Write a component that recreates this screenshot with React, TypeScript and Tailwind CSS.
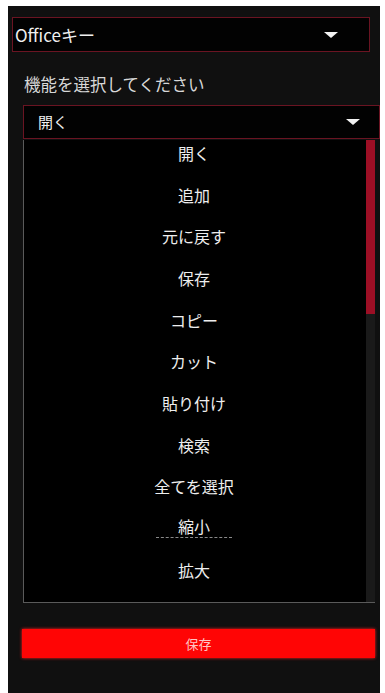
import React from "react";

const items = [
  "開く",
  "追加",
  "元に戻す",
  "保存",
  "コピー",
  "カット",
  "貼り付け",
  "検索",
  "全てを選択",
  "縮小",
  "拡大",
];

function Tri({ className }: { className?: string }) {
  return (
    <svg width="14" height="6" viewBox="0 0 14 6" className={className}>
      <polygon points="0,0 14,0 7,6" fill="#f2f2f2" />
    </svg>
  );
}

export default function App() {
  return (
    <div
      className="w-[385px] h-[693px] bg-white overflow-hidden"
      style={{ fontFamily: '"Noto Sans CJK JP", "Noto Sans", sans-serif' }}
    >
      <div className="ml-[8px] mt-[6px] w-[372px] h-[687px] bg-[#101010] flex flex-col">
        {/* first select */}
        <div className="ml-[4px] mt-[11px] w-[358px] h-[35px] bg-[#020202] border border-[#6a1422] flex items-center justify-between pl-[2px] pr-[31px]">
          <span className="text-[17px] text-[#f0f0f0] leading-none">Officeキー</span>
          <Tri />
        </div>

        {/* label */}
        <div className="ml-[16px] mt-[24px] text-[16.5px] leading-none text-[#d8d8d8]">
          機能を選択してください
        </div>

        {/* second select */}
        <div className="ml-[15px] mt-[12px] w-[357px] h-[34px] bg-[#020202] border border-[#6a1422] flex items-center justify-between pl-[14px] pr-[19px]">
          <span className="text-[15px] text-[#f0f0f0] leading-none">開く</span>
          <Tri />
        </div>

        {/* dropdown list */}
        <div className="ml-[15px] mt-[1px] w-[352px] h-[463px] bg-black border-l border-b border-[#5a5a5a] flex overflow-hidden">
          <div className="flex-1 flex flex-col pr-[2px]">
            {items.map((t) => (
              <div
                key={t}
                className="h-[41.7px] shrink-0 flex items-center justify-center pb-[15px]"
              >
                <span
                  className={
                    t === "縮小"
                      ? "text-[16px] leading-none text-[#eeeeee] border-b border-dashed border-[#8a8a8a] pb-[3px] px-[22px]"
                      : "text-[16px] leading-none text-[#eeeeee]"
                  }
                >
                  {t}
                </span>
              </div>
            ))}
          </div>
          <div className="w-[9px] flex flex-col">
            <div className="h-[174px] bg-[#9c0f25]" />
            <div className="flex-1 bg-[#1a1a1a]" />
          </div>
        </div>

        {/* save button */}
        <div className="ml-[14px] mt-[26px] w-[353px] h-[29px] bg-[#ff0505] flex items-center justify-center shadow-[0_0_3px_#ff2020]">
          <span className="text-[13px] leading-none text-[#ffc4c4]">保存</span>
        </div>
      </div>
    </div>
  );
}
